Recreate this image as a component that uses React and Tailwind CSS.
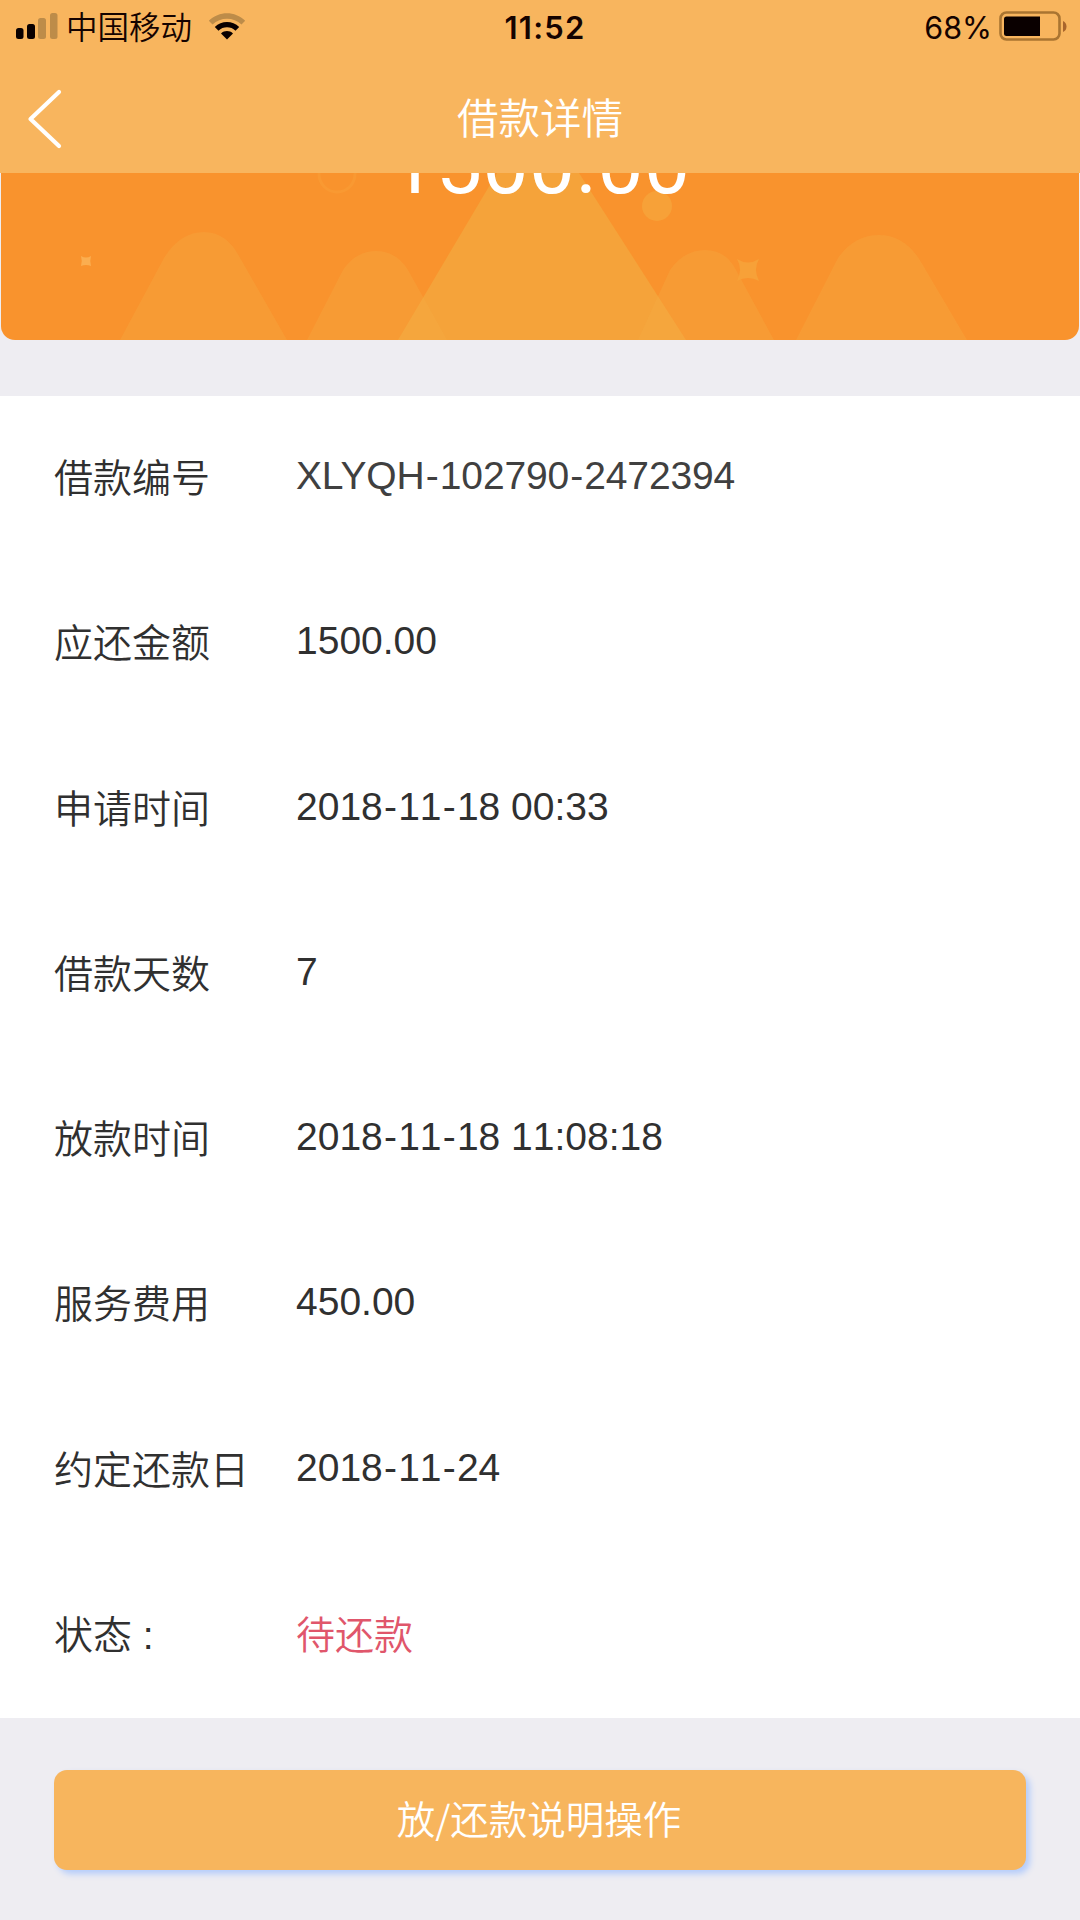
const details = [
  {
    label: "借款编号",
    value: "XLYQH-102790-2472394",
    color: "text-[#404040] tracking-[-0.15px]",
  },
  { label: "应还金额", value: "1500.00" },
  { label: "申请时间", value: "2018-11-18 00:33" },
  { label: "借款天数", value: "7" },
  { label: "放款时间", value: "2018-11-18 11:08:18" },
  { label: "服务费用", value: "450.00" },
  { label: "约定还款日", value: "2018-11-24" },
  { label: "状态 :", value: "待还款", status: true },
];

const SignalIcon = () => (
  <svg width="42" height="26" viewBox="0 0 42 26">
    <rect x="0" y="15" width="7.5" height="11" rx="2.5" fill="#0a0000" />
    <rect x="11" y="11" width="8" height="15" rx="2.5" fill="#0a0000" />
    <rect x="22" y="5" width="8" height="21" rx="2.5" fill="#bd8c49" />
    <rect x="34" y="0" width="7.5" height="26" rx="2.5" fill="#bd8c49" />
  </svg>
);

const WifiIcon = () => (
  <svg width="38" height="27" viewBox="0 0 38 27">
    <path
      d="M0.8 7.8C11 -2.2 27 -2.2 37.2 7.8L33.5 11.6C25.5 3.8 12.5 3.8 4.5 11.6Z"
      fill="#bd8c49"
    />
    <path
      d="M6.8 14C13.5 7.4 24.5 7.4 31.2 14L27.5 17.8C23 13.2 15 13.2 10.5 17.8Z"
      fill="#0a0000"
    />
    <path d="M13 20.4C16.5 17.2 21.5 17.2 25 20.4L19 26.5Z" fill="#0a0000" />
  </svg>
);

const BatteryIcon = () => (
  <svg width="69" height="30" viewBox="0 0 69 30">
    <rect
      x="1.5"
      y="1.5"
      width="59"
      height="27"
      rx="6"
      fill="none"
      stroke="#a97431"
      strokeWidth="2.6"
    />
    <path d="M7.5 5.5H41V25H7.5Q5 25 5 22.5V8Q5 5.5 7.5 5.5Z" fill="#0a0000" />
    <path d="M64 10Q67.5 11.5 67.5 15.5Q67.5 19.5 64 21Z" fill="#a9652c" />
  </svg>
);

const StatusBar = () => (
  <div className="grid h-[56px] grid-cols-3 items-start pl-4 pr-[12px] text-[#150300]">
    <div className="flex items-start">
      <div className="pt-[13px]">
        <SignalIcon />
      </div>
      <span className="ml-[8px] pt-[12px] text-[31.5px] leading-[32px] font-[350]">
        中国移动
      </span>
      <div className="ml-[16px] pt-[13px]">
        <WifiIcon />
      </div>
    </div>
    <span className="pt-[10px] pl-[6px] text-center font-['Inter'] text-[31px] leading-[36px] font-semibold tracking-[1.2px]">
      11:52
    </span>
    <div className="flex items-start justify-end">
      <span className="mr-[7px] pt-[10px] font-['Inter'] text-[30.5px] leading-[36px]">
        68%
      </span>
      <div className="pt-[11px]">
        <BatteryIcon />
      </div>
    </div>
  </div>
);

const NavBar = () => (
  <div className="grid h-[117px] grid-cols-[1fr_auto_1fr] pl-[26px] pr-[26px] text-white">
    <svg className="mt-[33px]" width="36" height="60" viewBox="0 0 36 60">
      <path
        d="M33 3L4.5 30L33 57"
        fill="none"
        stroke="currentColor"
        strokeWidth="4.2"
        strokeLinecap="round"
        strokeLinejoin="round"
      />
    </svg>
    <h1 className="pt-[43px] text-[41.5px] leading-[42px] font-[350]">借款详情</h1>
  </div>
);

// hills and stars behind the amount
const Hills = () => (
  <svg
    className="absolute inset-0"
    width="1078"
    height="167"
    viewBox="1 173 1078 167"
  >
    <path d="M398 340L497 173H579L686 340Z" fill="#f5a33a" />
    <g fill="#f5b048" fillOpacity="0.28">
      <path d="M120 340L164 258Q180 232 204 232Q226 232 239 256L287 340Z" />
      <path d="M307 340L343 270Q356 251 376 251Q396 251 408 270L447 340Z" />
      <path d="M638 340L670 270Q684 250 705 250Q726 250 736 270L774 340Z" />
      <path d="M796 340L838 258Q854 235 879 235Q905 235 921 262L967 340Z" />
    </g>
    <circle cx="657" cy="206" r="15" fill="#f7a138" />
    <circle
      cx="337"
      cy="174"
      r="18"
      fill="none"
      stroke="#f99932"
      strokeWidth="3"
    />
    <path d="M81 256Q86 259 91 256Q89.500 261 91 266Q86 264 81 266Q82.500 261 81 256Z" fill="#fbae50" />
    <path d="M737 259Q748 266 759 259Q753 269 759 281Q748 275 737 281Q743 269 737 259Z" fill="#f7a138" />
  </svg>
);

const AmountCard = () => (
  <div className="px-px">
    <div className="relative h-[167px] overflow-hidden rounded-b-[14px] bg-[#f9932d]">
      <Hills />
      <p className="relative -mt-[54px] text-center font-['Roboto'] text-[82px] leading-[92px] tracking-[0.4px] text-white">
        1500.00
      </p>
    </div>
  </div>
);

// hyphens get a little air on both sides
const ValueText = ({ text }) =>
  text.split("-").map((part, index) => (
    <span key={index}>
      {index > 0 && <span className="px-[1.2px]">-</span>}
      {part}
    </span>
  ));

const DetailRow = ({ label, value, color, status }) => (
  <div className="flex h-[165.25px] items-start pl-[54px]">
    <span className="w-[242px] pt-[63px] text-[39px] leading-[40px] font-[350] whitespace-pre">
      {label}
    </span>
    {status ? (
      <span className="pt-[63px] text-[39px] leading-[40px] font-[350] text-[#e0566b]">
        {value}
      </span>
    ) : (
      <span
        className={`pt-[58px] text-[39px] leading-[44px] ${color || "[font-kerning:none]"}`}
      >
        <ValueText text={value} />
      </span>
    )}
  </div>
);

export default function App() {
  return (
    <div className="flex h-[1920px] w-[1080px] flex-col overflow-hidden bg-[#eeedf2] font-['Liberation_Sans','Noto_Sans_CJK_SC',sans-serif]">
      <header className="h-[173px] bg-[#f8b55e]">
        <StatusBar />
        <NavBar />
      </header>

      <AmountCard />

      <main className="mt-[56px] h-[1322px] bg-white text-[#303030]">
        {details.map((item) => (
          <DetailRow key={item.label} {...item} />
        ))}
      </main>

      <div className="px-[54px] pt-[52px]">
        <button className="block h-[100px] w-full rounded-[13px] bg-[#f7b55d] pr-[2px] pb-[4px] font-['Noto_Sans_CJK_SC',sans-serif] text-[38.5px] font-[350] text-white shadow-[4px_4px_6px_#b4ccfb]">
          放/还款说明操作
        </button>
      </div>
    </div>
  );
}
